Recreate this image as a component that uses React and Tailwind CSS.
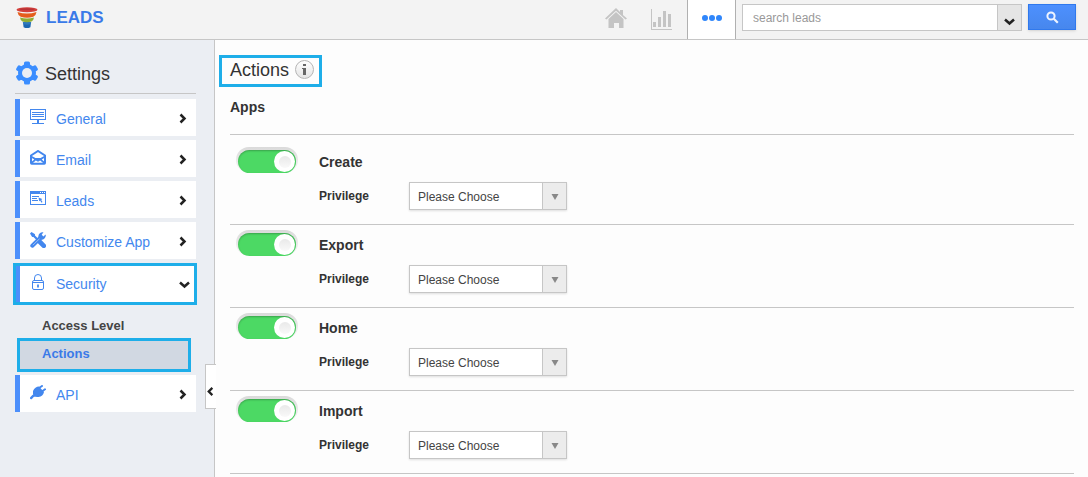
import { useState } from "react";

const MENU = [
  { id: "general", label: "General", Icon: BoardIcon },
  { id: "email", label: "Email", Icon: MailIcon },
  { id: "leads", label: "Leads", Icon: WindowIcon },
  { id: "customize", label: "Customize App", Icon: ToolsIcon },
];

const APPS = ["Create", "Export", "Home", "Import"];

function FunnelIcon() {
  return (
    <svg width="22" height="22" viewBox="0 0 22 22" aria-hidden="true">
      <path d="M7 15.500h8l-.6 4.700q-3.400 1.800-6.800 0z" fill="#1c67b0" />
      <path d="M6.800 15h8.400l-.4 2q-3.800 1.500-7.600 0z" fill="#2f79bd" />
      <path d="M4 10.500q7 2 14 0-.3 2.800-2.500 4-4.500 1.500-9 0-2.200-1.200-2.500-4z" fill="#8fae35" />
      <path d="M1.500 5q9.500 3 19 0-.5 3.600-3.200 4.800-6.300 1.700-12.600 0Q2 8.600 1.500 5z" fill="#e55d1c" />
      <ellipse cx="11" cy="2.700" rx="10.500" ry="2.500" fill="#d4403c" />
      <ellipse cx="11" cy="2.200" rx="7.500" ry="1" fill="#b93236" />
    </svg>
  );
}

function GearIcon() {
  return (
    <svg width="24" height="24" viewBox="0 0 24 24" aria-hidden="true">
      <g fill="#3a8dff">
        <rect x="9" y="0.500" width="6" height="23" rx="1.500" />
        <rect x="9" y="0.500" width="6" height="23" rx="1.500" transform="rotate(60 12 12)" />
        <rect x="9" y="0.500" width="6" height="23" rx="1.500" transform="rotate(120 12 12)" />
        <circle cx="12" cy="12" r="9" />
      </g>
      <circle cx="12" cy="12" r="5" fill="#ebeef3" />
    </svg>
  );
}

function BoardIcon() {
  return (
    <svg width="16" height="16" viewBox="0 0 16 16" fill="#4387ee" shapeRendering="crispEdges" aria-hidden="true">
      <path d="M0 0h16v11H0zM1 1v9h14V1z" fillRule="evenodd" />
      <path d="M2 3h12v1H2zM2 5h12v1H2zM2 7h12v1H2z" />
      <rect x="7" y="11" width="2" height="3" />
      <rect x="2" y="14" width="12" height="1" />
    </svg>
  );
}

function MailIcon() {
  return (
    <svg width="16" height="16" viewBox="0 0 16 16" fill="none" stroke="#4387ee" aria-hidden="true">
      <path d="M1 13V5.500L8 1l7 4.500V13q0 .7-.7.7H1.700Q1 13.700 1 13z" strokeWidth="2" />
      <path d="M1 6.500l4 2.300h6l4-2.300M1.500 13l4-3.500h5l4 3.500M5 9l3 1.800L11 9" strokeWidth="1.700" />
    </svg>
  );
}

function WindowIcon() {
  return (
    <svg width="16" height="16" viewBox="0 0 16 16" fill="#4387ee" aria-hidden="true">
      <path d="M0 0h16v14H0zM1 3v10h14V3z" fillRule="evenodd" shapeRendering="crispEdges" />
      <path d="M2 5h7v1H2zM2 7h5v1H2zM2 9h6v1H2z" shapeRendering="crispEdges" />
      <path d="M10 1h1v1h-1zM12 1h1v1h-1zM14 1h1v1h-1z" fill="#fff" shapeRendering="crispEdges" />
      <path d="M8.500 6.500l3.700 1.600-1 .8 1.300 2.200-1 .6-1.300-2.200-1 .8z" />
    </svg>
  );
}

function ToolsIcon() {
  return (
    <svg width="16" height="16" viewBox="0 0 16 16" fill="none" stroke="#4387ee" aria-hidden="true">
      <path d="M2 2L9 9" strokeWidth="2.200" />
      <path d="M0 1.500L1.500 0 5 2.200 4.800 4.800 2.200 5z" fill="#4387ee" stroke="none" />
      <path d="M9.500 9.500l4.300 4.300" strokeWidth="4.600" strokeLinecap="round" />
      <path d="M2.300 13.700L11 5.300" strokeWidth="4" strokeLinecap="round" />
      <path d="M2.800 13.200L10.500 5.800" strokeWidth=".7" stroke="#b9d3fa" />
      <path d="M8.500 5.500A4.300 4.300 0 0 1 13.500.3L11.700 2.700l1.600 1.700L15.700 2.500A4.300 4.300 0 0 1 10.500 7.500z" fill="#4387ee" stroke="none" />
    </svg>
  );
}

function LockIcon() {
  return (
    <svg width="16" height="16" viewBox="0 0 16 16" fill="none" stroke="#4387ee" aria-hidden="true">
      <rect x="2.500" y="6.500" width="11" height="9" rx="1.500" />
      <path d="M4.500 6.500V4q0-3.500 3.500-3.500T11.500 4v2.500M3 8.500h10" />
      <path d="M8 10.500v3" strokeWidth="1.800" />
    </svg>
  );
}

function PlugIcon() {
  return (
    <svg width="16" height="16" viewBox="0 0 16 16" aria-hidden="true">
      <path d="M3 6Q5 1.500 9 1.500l5 5.500q-1 4.500-5.500 5-2.500.4-4.500-.7Q2.500 9.500 3 6z" fill="#4387ee" />
      <path d="M5 10Q3 10.500 1.200 13" fill="none" stroke="#4387ee" strokeWidth="2.400" strokeLinecap="round" />
      <path d="M9 3L12 1M12.300 6.300l2.700-2" stroke="#4387ee" strokeWidth="2" strokeLinecap="round" />
    </svg>
  );
}

function HomeIcon() {
  return (
    <svg width="22" height="22" viewBox="0 0 22 22" fill="#c4c4c4" aria-hidden="true">
      <path d="M0 10.500L11 0l4 4V2h3v5l4 3.500-1.500 1L11 2.700 1.500 11.500z" />
      <path d="M3.500 11L11 4l7.500 7v9H14v-5H9v5H3.500z" />
    </svg>
  );
}

function ChartIcon() {
  return (
    <svg width="22" height="22" viewBox="0 0 22 22" fill="#c4c4c4" shapeRendering="crispEdges" aria-hidden="true">
      <path d="M0 0h1v20h20v1H0zM2 13h3v5H2zM7 8h3v10H7zM12 2h3v16h-3zM17 5h3v13h-3z" />
    </svg>
  );
}

function Chevron({ dir = "right", color = "#222" }) {
  const paths = {
    right: "M2.500 1.500L6.500 5.500 2.500 9.500",
    left: "M7 1.500L3 5.500l4 4",
    down: "M1 3.500l4.500 4 4.500-4",
  };
  return (
    <svg width="11" height="11" viewBox="0 0 11 11" fill="none" stroke={color} strokeWidth="2.500" aria-hidden="true">
      <path d={paths[dir]} />
    </svg>
  );
}

function MenuItem({ label, Icon, open }) {
  return (
    <button
      type="button"
      aria-expanded={!!open}
      className={
        open
          ? "-mr-px -ml-0.5 flex h-[42px] items-center border-3 border-[#1eaee9] bg-white text-left"
          : "mb-1 flex h-[37px] items-center bg-white text-left"
      }
    >
      <span className={open ? "w-1 self-stretch bg-[#4c8ffb]" : "w-[5px] self-stretch bg-[#4c8ffb]"} />
      <span className={open ? "ml-[10px] w-4 pb-1" : "ml-[10px] w-4 pb-px"}>
        <Icon />
      </span>
      <span className={open ? "ml-[10px] grow text-sm text-[#4387ee]" : "ml-[10px] grow pt-0.5 text-sm text-[#4387ee]"}>
        {label}
      </span>
      <span className={open ? "mr-1" : "mr-[7px] pt-0.5"}>
        <Chevron dir={open ? "down" : "right"} />
      </span>
    </button>
  );
}

function Header() {
  return (
    <header className="flex h-10 items-start border-b border-[#c6c6c6] bg-[#f3f3f3]">
      <a href="#leads" className="flex grow items-center gap-2 pt-1.5 pl-4 text-[17px] leading-6 font-bold text-[#3a7ae8]">
        <FunnelIcon />
        LEADS
      </a>
      <nav className="flex h-[39px]">
        <a href="#home" aria-label="Home" className="mr-6 pt-2">
          <HomeIcon />
        </a>
        <a href="#reports" aria-label="Reports" className="mr-[14px] pt-[9px]">
          <ChartIcon />
        </a>
        <a
          href="#more"
          aria-label="More"
          className="flex w-[49px] items-center justify-center gap-px border-x border-[#b0b0b0] bg-white pb-[3px]"
        >
          <span className="size-1.5 rounded-full bg-[#2f86fb]" />
          <span className="size-1.5 rounded-full bg-[#2f86fb]" />
          <span className="size-1.5 rounded-full bg-[#2f86fb]" />
        </a>
      </nav>
      <form className="flex pt-1 pr-3 pl-1.5" onSubmit={(e) => e.preventDefault()}>
        <input
          type="text"
          aria-label="Search leads"
          placeholder="search leads"
          className="h-[27px] w-64 border border-[#c6c6c6] bg-white px-[10px] text-xs outline-none placeholder:text-[#999]"
        />
        <button
          type="button"
          aria-label="Search options"
          className="-ml-px flex h-[27px] w-[25px] items-end justify-center border border-[#c6c6c6] bg-[#e5e5e5] pb-[3px]"
        >
          <Chevron dir="down" />
        </button>
        <button
          type="submit"
          aria-label="Search"
          className="ml-1.5 flex h-[26px] w-12 items-center justify-center border border-[#3079ed] bg-linear-to-b from-[#4d90fe] to-[#4787ed] shadow-sm"
        >
          <svg width="13" height="13" viewBox="0 0 13 13" fill="none" stroke="#eef4ff" aria-hidden="true">
            <circle cx="5" cy="5" r="3.600" strokeWidth="2" />
            <path d="M7.800 7.800l4 4" strokeWidth="2.200" />
          </svg>
        </button>
      </form>
    </header>
  );
}

function Sidebar() {
  return (
    <aside className="relative flex w-[215px] shrink-0 flex-col border-r border-[#c6c6c6] bg-[#ebeef3] pr-[18px] pl-[15px]">
      <h2 className="mb-[5px] flex h-[54px] items-end gap-[6px] border-b border-[#c6c6c6] pb-2 text-lg leading-[22px] text-[#333]">
        <GearIcon />
        Settings
      </h2>
      {MENU.map((item) => (
        <MenuItem key={item.id} {...item} />
      ))}
      <MenuItem label="Security" Icon={LockIcon} open />
      <ul className="mb-[3px] pt-[11px] text-[13px] font-bold">
        <li className="h-[22px] pl-[27px] leading-5">
          <a href="#access-level" className="text-[#444]">Access Level</a>
        </li>
        <li className="mr-[5px] ml-0.5 h-[34px] border-3 border-[#1eaee9] bg-[#d1d8e2] pl-[22px] leading-[26px]">
          <a href="#actions" className="text-[#3a7ae8]">Actions</a>
        </li>
      </ul>
      <MenuItem label="API" Icon={PlugIcon} />
      <button
        type="button"
        aria-label="Collapse menu"
        className="absolute top-[324px] -right-0.5 flex h-[45px] w-[11px] items-center border border-r-0 border-[#c6c6c6] bg-white pt-[9px]"
      >
        <Chevron dir="left" />
      </button>
    </aside>
  );
}

function Toggle({ id, label, checked, onChange }) {
  return (
    <label className="relative flex h-[26px] w-[62px] rounded-full bg-linear-to-b from-[#dadada] to-[#f6f6f6] pt-[3px] pl-0.5">
      <input
        id={id}
        type="checkbox"
        aria-label={label}
        checked={checked}
        onChange={onChange}
        className="h-[23px] w-[58px] appearance-none rounded-full bg-[#ccc] shadow-[inset_0_1px_2px_rgba(0,0,0,0.25)] checked:bg-[#4cd964]"
      />
      <span
        className={
          "pointer-events-none absolute top-1 flex size-[21px] items-center justify-center rounded-full bg-white " +
          (checked ? "right-[3px]" : "left-[3px]")
        }
      >
        <span className="size-3 rounded-full bg-linear-to-b from-[#e9e9e9] to-[#f9f9f9]" />
      </span>
    </label>
  );
}

function AppRow({ name }) {
  const [enabled, setEnabled] = useState(true);
  const key = name.toLowerCase();

  return (
    <section className="flex h-[83px] border-b border-[#c6c6c6] pt-[5px] pl-1.5 text-[#333]">
      <Toggle id={key + "-enabled"} label={name} checked={enabled} onChange={() => setEnabled(!enabled)} />
      <div className="ml-[21px]">
        <h4 className="pt-[5px] text-sm leading-5 font-bold">{name}</h4>
        <div className="mt-[10px] flex items-center">
          <label htmlFor={key + "-privilege"} className="w-[90px] text-xs font-bold">
            Privilege
          </label>
          <div className="relative">
            <select
              id={key + "-privilege"}
              className="block h-7 w-[158px] appearance-none border border-[#c6c6c6] bg-white pt-px pl-2 text-xs text-[#444] shadow-[0_1px_2px_rgba(0,0,0,0.12)]"
            >
              <option>Please Choose</option>
              <option>Allow</option>
              <option>Deny</option>
            </select>
            <span className="pointer-events-none absolute inset-y-px right-px flex w-6 items-center justify-center border-l border-[#c6c6c6] bg-[#ececec] pt-px">
              <svg width="8" height="6" viewBox="0 0 8 6" fill="#888" aria-hidden="true">
                <path d="M.5 0h7L4 6z" />
              </svg>
            </span>
          </div>
        </div>
      </div>
    </section>
  );
}

export default function App() {
  return (
    <div className="flex min-h-screen flex-col bg-[#fdfdfd] font-['Liberation_Sans',Arial,sans-serif]">
      <Header />
      <div className="flex grow">
        <Sidebar />
        <main className="grow pt-[15px] pr-[14px] pl-[15px]">
          <div className="-ml-[11px] flex h-8 w-fit items-center gap-1.5 border-3 border-[#1eaee9] pr-[5px] pb-[3px] pl-2">
            <h1 className="text-lg leading-6 text-[#333]">Actions</h1>
            <button
              type="button"
              aria-label="About actions"
              className="flex size-[19px] items-center justify-center rounded-full border border-[#b5b5b5] bg-linear-to-b from-white to-[#e4e4e4]"
            >
              <svg width="5" height="11" viewBox="0 0 5 11" fill="#666" aria-hidden="true">
                <path d="M1 0h3v2H1zM0 4h4v7H1V5H0z" />
              </svg>
            </button>
          </div>
          <h3 className="mt-[10px] text-sm leading-5 font-bold text-[#333]">Apps</h3>
          <div className="mt-[17px] border-t border-[#c6c6c6] pt-[7px]">
            {APPS.map((name) => (
              <AppRow key={name} name={name} />
            ))}
          </div>
        </main>
      </div>
    </div>
  );
}
